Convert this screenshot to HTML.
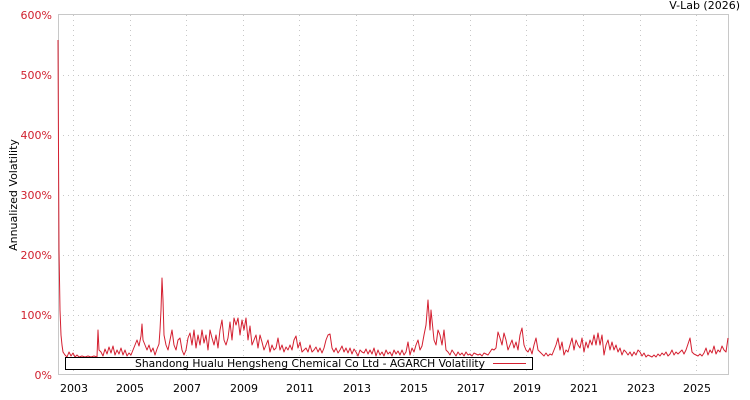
<!DOCTYPE html>
<html><head><meta charset="utf-8"><style>
html,body{margin:0;padding:0;background:#fff;}
svg{display:block;font-family:"DejaVu Sans","Liberation Sans",sans-serif;}
</style></head><body>
<svg width="750" height="400" viewBox="0 0 750 400">
<rect x="0" y="0" width="750" height="400" fill="#fff"/>
<text x="740" y="9" font-size="11" text-anchor="end" fill="#000">V-Lab (2026)</text>
<g stroke="#c8c8c8" stroke-width="1" stroke-dasharray="1,4" fill="none">
<line x1="58" y1="75.5" x2="728" y2="75.5"/>
<line x1="58" y1="135.5" x2="728" y2="135.5"/>
<line x1="58" y1="195.5" x2="728" y2="195.5"/>
<line x1="58" y1="255.5" x2="728" y2="255.5"/>
<line x1="58" y1="315.5" x2="728" y2="315.5"/>
<line x1="73.5" y1="15" x2="73.5" y2="375"/>
<line x1="130.5" y1="15" x2="130.5" y2="375"/>
<line x1="186.5" y1="15" x2="186.5" y2="375"/>
<line x1="243.5" y1="15" x2="243.5" y2="375"/>
<line x1="299.5" y1="15" x2="299.5" y2="375"/>
<line x1="356.5" y1="15" x2="356.5" y2="375"/>
<line x1="413.5" y1="15" x2="413.5" y2="375"/>
<line x1="470.5" y1="15" x2="470.5" y2="375"/>
<line x1="526.5" y1="15" x2="526.5" y2="375"/>
<line x1="583.5" y1="15" x2="583.5" y2="375"/>
<line x1="640.5" y1="15" x2="640.5" y2="375"/>
<line x1="696.5" y1="15" x2="696.5" y2="375"/>
</g>
<rect x="58.5" y="14.5" width="670" height="360" fill="none" stroke="#c8c8c8"/>
<g font-size="11" fill="#d0202e" text-anchor="end">
<text x="52" y="19">600%</text>
<text x="52" y="79">500%</text>
<text x="52" y="139">400%</text>
<text x="52" y="199">300%</text>
<text x="52" y="259">200%</text>
<text x="52" y="319">100%</text>
<text x="52" y="379">0%</text>
</g>
<text transform="translate(17,195) rotate(-90)" font-size="11" text-anchor="middle" fill="#000">Annualized Volatility</text>
<g font-size="11" fill="#000" text-anchor="middle">
<text x="74" y="392">2003</text><text x="130" y="392">2005</text><text x="187" y="392">2007</text>
<text x="244" y="392">2009</text><text x="300" y="392">2011</text><text x="357" y="392">2013</text>
<text x="414" y="392">2015</text><text x="471" y="392">2017</text><text x="527" y="392">2019</text>
<text x="584" y="392">2021</text><text x="641" y="392">2023</text><text x="697" y="392">2025</text>
</g>
<polyline fill="none" stroke="#d41f30" stroke-width="1" stroke-linejoin="round" points="58,40 58.5,150 59,250 60,310 61,335 62,345 63,352 65,355 67,357 69,352 71,356 73,353 75,357 77,355 79,357 82,356 85,357 88,356 91,357 94,356 97,357 98,330 99,350 101,352 103,356 105,349 107,354 109,347 111,353 113,346 115,355 117,350 119,354 121,348 123,355 125,350 127,356 129,353 131,355 133,350 135,345 137,340 139,346 141,336 142,324 143,340 145,345 147,350 149,345 151,352 153,348 155,355 157,349 159,344 160,330 161,310 162,278 163,300 164,335 166,345 168,350 170,340 172,330 174,345 176,350 178,340 180,338 182,350 184,355 186,350 188,338 190,333 192,345 194,330 196,348 198,335 200,345 202,330 204,343 206,335 208,350 210,330 212,338 214,345 216,335 218,348 220,330 222,320 224,340 226,345 228,338 230,322 232,340 234,318 236,325 238,318 240,335 242,320 244,330 246,318 248,340 250,326 252,345 254,340 256,335 258,348 260,335 262,342 264,350 266,345 268,340 270,352 272,345 274,350 276,348 278,338 280,350 282,345 284,352 286,347 288,350 290,345 292,350 294,340 296,336 298,348 300,342 302,352 304,350 306,348 308,352 310,345 312,352 314,350 316,347 318,352 320,348 322,353 324,348 326,340 328,335 330,334 332,348 334,352 336,348 338,353 340,350 342,346 344,352 346,348 348,353 350,348 352,354 354,349 356,352 358,356 360,350 362,352 364,353 366,349 368,354 370,350 372,354 374,348 376,356 378,350 380,355 382,352 384,356 386,350 388,354 390,352 392,356 394,350 396,354 398,351 400,355 402,350 404,355 406,352 408,342 410,355 412,348 414,352 416,345 418,340 420,350 422,346 424,335 426,325 428,300 429,315 430,330 431,310 432,320 434,340 436,345 438,330 440,335 442,345 444,330 446,350 448,352 450,355 452,350 454,353 456,356 458,352 460,355 462,353 464,356 466,352 468,355 470,354 472,356 474,353 476,354 478,355 480,354 482,356 484,353 486,354 488,355 490,352 492,349 494,350 496,348 498,332 500,338 502,345 504,333 506,340 508,350 510,345 512,340 514,348 516,342 518,350 520,335 522,328 524,345 526,350 528,352 530,348 532,354 534,345 536,338 538,350 540,352 542,354 544,356 546,353 548,356 550,354 552,355 554,350 556,345 558,338 560,350 562,342 564,355 566,350 568,352 570,345 572,338 574,350 576,340 578,345 580,348 582,338 584,352 586,342 588,348 590,340 592,345 594,335 596,345 598,333 600,345 602,335 604,355 606,345 608,340 610,350 612,342 614,350 616,345 618,352 620,348 622,355 624,350 626,352 628,355 630,352 632,356 634,352 636,355 638,350 640,352 642,356 644,353 646,357 648,355 650,356 652,357 654,355 656,357 658,354 660,356 662,353 664,355 666,352 668,356 670,354 672,350 674,355 676,352 678,354 680,352 682,350 684,354 686,350 688,344 690,338 692,352 694,354 696,355 698,356 700,354 702,356 704,353 706,348 708,355 710,350 712,353 714,346 716,354 718,350 720,352 722,346 724,350 726,352 728,338"/>
<rect x="65.5" y="357.5" width="467" height="12" fill="#fff" stroke="#000" stroke-width="1"/>
<text x="135" y="367" font-size="11" textLength="350" lengthAdjust="spacingAndGlyphs" fill="#000">Shandong Hualu Hengsheng Chemical Co Ltd - AGARCH Volatility</text>
<line x1="493" y1="363.5" x2="526" y2="363.5" stroke="#d41f30" stroke-width="1"/>
</svg>
</body></html>
